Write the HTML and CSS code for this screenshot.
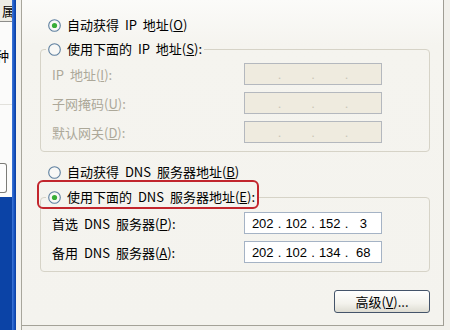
FILE: index.html
```html
<!DOCTYPE html>
<html lang="zh-CN">
<head>
    <meta charset="UTF-8">
    <title>Internet 协议 (TCP/IP) 属性</title>
    <link rel="stylesheet" href="styles.css">
</head>
<body>
    <div class="fondo">
        <div class="pestana"><span>属</span></div>
        <div class="fila-fondo"><span>种</span></div>
        <div class="linea-fondo"></div>
        <div class="boton-fondo"></div>
        <div class="escritorio"></div>
    </div>
    <div class="marco"></div>
    <div class="borde"></div>

    <div class="dialogo">
        <label class="radio">
            <svg class="circulo" width="13" height="13" viewBox="0 0 13 13">
                <circle cx="6.5" cy="6.5" r="5.8" fill="#f8f8f6" stroke="#5d7f9f" stroke-width="1.1"/>
                <circle cx="6.5" cy="6.5" r="2.6" fill="#37ad37"/>
            </svg>
            <span>自动获得 IP 地址(<u>O</u>)</span>
        </label>

        <fieldset class="grupo">
            <legend class="radio">
                <svg class="circulo" width="13" height="13" viewBox="0 0 13 13">
                    <circle cx="6.5" cy="6.5" r="5.8" fill="#f8f8f6" stroke="#5d7f9f" stroke-width="1.1"/>
                </svg>
                <span>使用下面的 IP 地址(<u>S</u>):</span>
            </legend>
            <div class="campos">
                <span class="etiqueta apagada">IP 地址(<u>I</u>):</span>
                <div class="ip apagado"><span></span><i>.</i><span></span><i>.</i><span></span><i>.</i><span></span></div>

                <span class="etiqueta apagada">子网掩码(<u>U</u>):</span>
                <div class="ip apagado"><span></span><i>.</i><span></span><i>.</i><span></span><i>.</i><span></span></div>

                <span class="etiqueta apagada">默认网关(<u>D</u>):</span>
                <div class="ip apagado"><span></span><i>.</i><span></span><i>.</i><span></span><i>.</i><span></span></div>
            </div>
        </fieldset>

        <label class="radio dns-auto">
            <svg class="circulo" width="13" height="13" viewBox="0 0 13 13">
                <circle cx="6.5" cy="6.5" r="5.8" fill="#f8f8f6" stroke="#5d7f9f" stroke-width="1.1"/>
            </svg>
            <span>自动获得 DNS 服务器地址(<u>B</u>)</span>
        </label>

        <fieldset class="grupo grupo-dns">
            <legend class="radio marcado">
                <svg class="circulo" width="13" height="13" viewBox="0 0 13 13">
                    <circle cx="6.5" cy="6.5" r="5.8" fill="#f8f8f6" stroke="#5d7f9f" stroke-width="1.1"/>
                    <circle cx="6.5" cy="6.5" r="2.6" fill="#37ad37"/>
                </svg>
                <span>使用下面的 DNS 服务器地址(<u>E</u>):</span>
            </legend>
            <div class="campos">
                <span class="etiqueta">首选 DNS 服务器(<u>P</u>):</span>
                <div class="ip"><span>202</span><i>.</i><span>102</span><i>.</i><span>152</span><i>.</i><span>3</span></div>

                <span class="etiqueta">备用 DNS 服务器(<u>A</u>):</span>
                <div class="ip"><span>202</span><i>.</i><span>102</span><i>.</i><span>134</span><i>.</i><span>68</span></div>
            </div>
        </fieldset>

        <button class="avanzado">高级(<u>V</u>)...</button>
    </div>
</body>
</html>
```

FILE: styles.css
```css
html, body{
    margin: 0;
    padding: 0;
}

body{
    width: 450px;
    height: 330px;
    overflow: hidden;
    display: flex;
    align-items: flex-start;
    background: #f1f0eb;
    font-family: "Noto Sans CJK SC", "Liberation Sans", sans-serif;
    font-size: 13px;
    color: #000;
}

/* ventana de atras */
.fondo{
    width: 12px;
    height: 330px;
    display: flex;
    flex-direction: column;
    background: #fbfbfa;
    overflow: hidden;
}
.pestana{
    height: 21px;
    background: #eeece4;
    border-bottom: 1px solid #8d8d8a;
    display: flex;
    justify-content: flex-end;
    align-items: center;
    overflow: hidden;
}
.pestana span{
    margin-right: -3px;
    line-height: 16px;
}
.fila-fondo{
    margin-top: 26px;
    height: 16px;
    line-height: 16px;
    overflow: hidden;
}
.fila-fondo span{
    margin-left: -4px;
}
.linea-fondo{
    margin-top: 40px;
    height: 1px;
    background: #e2e1dc;
}
.boton-fondo{
    margin-top: 58px;
    width: 6px;
    height: 28px;
    background: #fdfdfd;
    border: 1px solid #7c7c78;
    border-left: none;
    border-radius: 0 3px 3px 0;
}
.escritorio{
    margin-top: 4px;
    flex: 1;
    background: #0b43a6;
}

.marco{
    width: 4px;
    height: 330px;
    background: linear-gradient(to right, #3f78d8, #1450bd 60%, #0c3f9f);
}
.borde{
    width: 5px;
    height: 330px;
    background: #f3f2ed;
    border-right: 1px solid #a8a69c;
}

/* dialogo */
.dialogo{
    box-sizing: border-box;
    width: 422px;
    height: 326px;
    padding: 17px 13px 0 18px;
    display: flex;
    flex-direction: column;
    background: linear-gradient(#fbfbf9, #f5f4ef 45px, #f4f3ee);
    border-right: 1px solid #9f9d94;
    border-bottom: 1px solid #a4a298;
}

.radio{
    display: flex;
    align-items: center;
    gap: 6px;
    height: 16px;
    line-height: 16px;
    padding-left: 8px;
    white-space: nowrap;
    word-spacing: 3px;
}
.circulo{
    flex: none;
}

.grupo{
    margin: 8px 0 0 0;
    padding: 6px 0 8px 0;
    border: 1px solid #d6d3c7;
    border-radius: 4px;
}
.grupo legend{
    margin-left: 5px;
    padding: 0 2px;
    display: flex;
}
.grupo-dns{
    margin-top: 9px;
    padding-top: 7px;
}
.dns-auto{
    margin-top: 12px;
}

.marcado{
    position: relative;
}
.marcado::after{
    content: "";
    position: absolute;
    left: -9px;
    top: -9px;
    right: -2px;
    bottom: -4px;
    border: 2px solid #c2262d;
    border-radius: 6px;
}

.campos{
    display: grid;
    grid-template-columns: 192px 138px;
    row-gap: 7px;
    padding-left: 11px;
    align-items: center;
}
.etiqueta{
    word-spacing: 3px;
    white-space: nowrap;
}
.apagada{
    color: #aca899;
}

.ip{
    box-sizing: border-box;
    height: 22px;
    padding: 0 3px;
    display: grid;
    grid-template-columns: 1fr 4px 1fr 4px 1fr 4px 1fr;
    align-items: center;
    background: #fff;
    border: 1px solid #a5b3c5;
    font-family: "Liberation Sans", sans-serif;
    font-size: 13px;
}
.ip span{
    text-align: center;
}
.ip i{
    font-style: normal;
    text-align: center;
}
.apagado{
    background: #efebdf;
    border-color: #b4b8be;
    color: #c9c5b6;
}

.avanzado{
    align-self: flex-end;
    margin-top: 18px;
    width: 96px;
    height: 23px;
    padding: 0;
    font-family: inherit;
    font-size: 13px;
    color: #000;
    background: linear-gradient(#ffffff, #f3f2ec 60%, #dedcd2);
    border: 1px solid #44546a;
    border-radius: 3px;
}
```
